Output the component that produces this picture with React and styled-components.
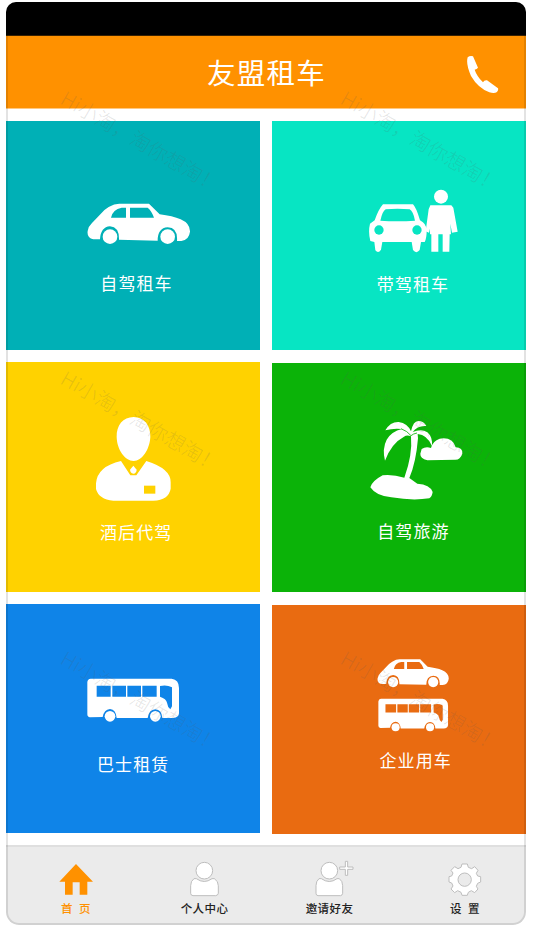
import React from "react";
import styled, { createGlobalStyle } from "styled-components";

const GlobalStyle = createGlobalStyle`
  *, *::before, *::after { box-sizing: border-box; }
  body {
    margin: 0;
    background: #fff;
    font-family: "Noto Sans CJK SC", "Liberation Sans", sans-serif;
  }
`;

const Phone = styled.div`
  position: relative;
  width: 520px;
  height: 923px;
  margin: 2px 0 0 6px;
  border-radius: 10px 10px 13px 13px;
  overflow: hidden;
  background: #fff;
  display: flex;
  flex-direction: column;

  &::after {
    content: "";
    position: absolute;
    inset: 0;
    border: 2px solid rgba(0, 0, 0, 0.11);
    border-top: 0;
    border-radius: inherit;
    pointer-events: none;
  }
`;

const StatusBar = styled.div`
  flex: none;
  height: 34px;
  background: #000;
  border-bottom: 1px solid #3a2100;
`;

const Header = styled.header`
  flex: none;
  height: 72px;
  background: #ff9100;
  display: grid;
  grid-template-columns: 1fr auto 1fr;
  align-items: center;
  box-shadow: 0 1px 0 #ffc880;
`;

const Title = styled.h1`
  grid-column: 2;
  margin: 0 0 1px;
  color: #fff;
  font-size: 28.5px;
  font-weight: 400;
  line-height: 40px;
  letter-spacing: 1.3px;
  padding-left: 1px;
`;

const CallButton = styled.button`
  justify-self: end;
  border: 0;
  padding: 0;
  margin: 5px 27px 0 0;
  background: none;
  line-height: 0;
`;

const Columns = styled.main`
  flex: 1;
  display: flex;
  justify-content: space-between;
  padding-top: 13px;
`;

const Column = styled.div`
  width: 254px;
  display: flex;
  flex-direction: column;
  gap: ${(p) => p.$gap}px;
`;

const Tile = styled.section`
  flex: none;
  height: 229.3px;
  background: ${(p) => p.$color};
  color: #fff;
  padding-top: ${(p) => p.$top}px;
`;

const TileIcon = styled.div`
  height: ${(p) => p.$height}px;
  margin-left: ${(p) => p.$left}px;
  line-height: 0;
`;

const TileLabel = styled.div`
  margin: ${(p) => p.$gap}px 0 0 ${(p) => p.$left}px;
  font-size: 17px;
  font-weight: 400;
  line-height: 24px;
  letter-spacing: 1.1px;
`;

const TabBar = styled.nav`
  flex: none;
  height: 80px;
  padding: 13px 0 0 40px;
  background: #ebebeb;
  border-top: 2px solid #dfdfdf;
  display: grid;
  grid-template-columns: 128.5px 125px 135.5px 1fr;
`;

const Tab = styled.a`
  width: 60px;
  display: flex;
  flex-direction: column;
  align-items: center;
  color: ${(p) => (p.$active ? "#ff9100" : "#222")};
`;

const TabIcon = styled.div`
  height: 40px;
  padding-top: ${(p) => p.$top || 0}px;
  margin-left: ${(p) => p.$shift || 0}px;
  line-height: 0;
`;

const TabLabel = styled.span`
  font-size: 11.5px;
  font-weight: 500;
  line-height: 16px;
  letter-spacing: 0.4px;
  white-space: pre;
`;

const Watermark = styled.div`
  position: absolute;
  left: ${(p) => p.$x}px;
  top: ${(p) => p.$y}px;
  transform: rotate(30deg);
  transform-origin: 0 50%;
  color: rgba(90, 90, 90, 0.17);
  font-size: 20px;
  font-weight: 300;
  line-height: 20px;
  letter-spacing: 0.1px;
  white-space: nowrap;
  pointer-events: none;
`;

const Svg = ({ box, scale = 3, children }) => {
  const [, , w, h] = box.split(" ").map(Number);
  return (
    <svg viewBox={box} width={w / scale} height={h / scale} fill="#fff">
      {children}
    </svg>
  );
};

const PhoneIcon = () => (
  <Svg box="604 165 99 117">
    <path d="M609 172Q616 166 625 169L640 203Q637 208 630 209Q636 228 655 247Q658 240 667 241L700 265Q702 270 697 276Q689 282 674 277Q640 264 619 228Q603 192 609 172Z" />
  </Svg>
);

const CarShape = ({ hole }) => (
  <g>
    <path d="M53 124Q55 110 66 100L89 76Q103 59 116 52Q133 42 148 42H237L269 74Q308 79 332 89Q361 102 360 126Q357 151 334 154H321Q324 114 293 113Q263 115 263 153L147 150Q148 112 120 110Q92 112 90 149H70Q50 145 53 124Z" />
    <path fill={hole} d="M123 84Q128 59 155 54H168V84ZM180 54H233Q245 64 252 84H180Z" />
    <circle cx="120" cy="141" r="22" />
    <circle cx="293" cy="141" r="22" />
  </g>
);

const CarIcon = () => (
  <Svg box="51 40 311 126">
    <CarShape hole="#00b0b6" />
  </Svg>
);

const DriverIcon = () => (
  <Svg box="54 26 270 192">
    <path d="M99 72H189Q199 82 210 120Q230 130 230 151Q230 174 224 185H213L209 209Q199 222 189 209L185 185H97L93 208Q85 221 76 210L73 185L61 182Q54 155 60 130L74 120Q86 86 99 72Z" />
    <path fill="#07e5c3" d="M107 87Q142 84 179 87Q190 93 195 121Q142 125 91 121Q97 93 107 87Z" />
    <circle cx="87" cy="149" r="14" fill="#07e5c3" />
    <circle cx="201" cy="149" r="14" fill="#07e5c3" />
    <circle cx="273" cy="49" r="21" />
    <path d="M241 75H304L310 82L323 154L306 157L301 130L303 162H299L298 214H278V162H265V214H244V162H240V145L237 157L227 153L236 87Z" />
  </Svg>
);

const ChauffeurIcon = () => (
  <Svg box="135 168 231 258">
    <path d="M251 171C282 171 302 196 301 231C299 269 276 303 251 303C225 303 201 269 200 231C199 196 219 171 251 171Z" />
    <path d="M213 303L241 346H259L289 303Q363 326 362 367V386Q356 420 310 422H190Q146 418 138 387V370Q142 319 213 303Z" />
    <path d="M250 317L260 329Q259 340 250 341Q241 339 240 329Z" />
    <path fill="#ffd200" d="M282 377H316V401H282Z" />
  </Svg>
);

const IslandIcon = () => (
  <Svg box="120 180 282 243">
    <path d="M166 211Q181 185 206 186Q233 190 243 214Q250 180 268 183Q282 185 289 198Q262 196 248 216Q274 205 292 217Q308 230 306 258Q291 224 263 222L264 235Q258 308 238 354L262 371Q300 373 308 396Q306 410 298 415Q248 423 184 412Q138 408 121 382Q126 363 158 346Q190 343 223 353Q248 285 243 229Q231 224 222 230Q184 250 165 302Q156 266 170 239Q185 214 216 207Q190 204 166 211Z" />
    <path d="M213 206Q232 213 243 227Q250 221 261 219" fill="none" stroke="#0bb308" strokeWidth="2.5" />
    <path d="M275 267Q287 259 303 264Q308 243 329 236Q368 230 377 262Q399 263 397 281Q391 299 376 299L292 301Q270 295 271 281Z" />
  </Svg>
);

const BusShape = ({ hole }) => (
  <g>
    <path d="M122 116H365Q387 119 387 144V220Q386 233 370 234H337Q335 209 316 208Q297 209 293 234H200Q198 209 180 207Q162 209 158 231L120 232Q112 231 112 223V126Q113 117 122 116Z" />
    <path fill={hole} d="M140 137H182V170H140ZM187 137H228V170H187ZM232 137H273V170H232ZM277 137H320V170H277ZM330 138Q350 133 366 142V199L361 208Q353 202 351 188Q349 176 330 170Z" />
    <circle cx="180" cy="229" r="16" />
    <circle cx="316" cy="229" r="16" />
  </g>
);

const BusIcon = () => (
  <Svg box="108 111 282 135">
    <BusShape hole="#0f84e8" />
  </Svg>
);

const FleetIcon = () => (
  <Svg box="141 54 219 222">
    <g transform="translate(106 29) scale(.695 .69)">
      <CarShape hole="#e96b11" />
    </g>
    <g transform="translate(60 89) scale(.76 .755)">
      <BusShape hole="#e96b11" />
    </g>
  </Svg>
);

const HomeIcon = () => (
  <Svg box="178 114 104 96">
    <path fill="#ff9100" d="M229 117L280 170H263V209H240V172H219V209H196V170H179Z" />
  </Svg>
);

const OUTLINE = { stroke: "#bdbdbd", strokeWidth: 3, strokeLinejoin: "round" };

const PersonIcon = () => (
  <Svg box="565 108 92 108">
    <path {...OUTLINE} d="M580 161H587Q611 178 634 161H641Q653 168 653 182V205Q652 211 645 212H577Q570 211 570 205V182Q570 168 580 161Z" />
    <circle {...OUTLINE} cx="611" cy="137" r="25" />
  </Svg>
);

const InviteIcon = () => (
  <Svg box="150 105 120 111">
    <path {...OUTLINE} d="M165 161H172Q196 178 219 161H226Q236 168 236 182V205Q235 211 230 212H162Q156 211 156 205V182Q156 168 165 161Z" />
    <circle {...OUTLINE} cx="196" cy="137" r="25" />
    <path {...OUTLINE} d="M244 109H251V126H267V133H251V151H244V133H227V126H244Z" />
  </Svg>
);

const GearIcon = () => (
  <Svg box="551 112 102 104">
    <path {...OUTLINE} d="M593 118H609L612 128L622 132L631 126L641 137L636 146L640 154L649 156V172L640 176L636 185L641 193L631 204L621 198L612 203L609 212H593L590 203L580 198L571 204L560 193L566 184L562 175L554 172V156L562 154L566 145L560 137L571 126L581 132L590 128Z" />
    <circle {...OUTLINE} cx="601" cy="165" r="20" fill="#ebebeb" />
  </Svg>
);

const LEFT = [
  { label: "自驾租车", color: "#00b0b6", icon: CarIcon, top: 82.3, left: 81, height: 42, gap: 26, textLeft: 94.3 },
  { label: "酒后代驾", color: "#ffd200", icon: ChauffeurIcon, top: 54, left: 89, height: 86, gap: 17.5, textLeft: 94 },
  { label: "巴士租赁", color: "#0f84e8", icon: BusIcon, top: 73, left: 80, height: 45, gap: 30, textLeft: 91 },
];

const RIGHT = [
  { label: "带驾租车", color: "#07e5c3", icon: DriverIcon, top: 67.7, left: 96, height: 64, gap: 19, textLeft: 104.8 },
  { label: "自驾旅游", color: "#0bb308", icon: IslandIcon, top: 57, left: 98, height: 81, gap: 18, textLeft: 105.2 },
  { label: "企业用车", color: "#e96b11", icon: FleetIcon, top: 53.5, left: 105, height: 74, gap: 16, textLeft: 107.5 },
];

const TABS = [
  { label: "首  页", icon: HomeIcon, active: true, top: 3 },
  { label: "个人中心", icon: PersonIcon, top: 1 },
  { label: "邀请好友", icon: InviteIcon, shift: 8, top: 0 },
  { label: "设  置", icon: GearIcon, top: 2 },
];

const MARKS = [92, 372, 652].flatMap((y) => [57, 337].map((x) => ({ x, y: y - 8 })));

const ServiceTile = ({ item }) => {
  const Icon = item.icon;
  return (
    <Tile $color={item.color} $top={item.top}>
      <TileIcon $left={item.left} $height={item.height}>
        <Icon />
      </TileIcon>
      <TileLabel $left={item.textLeft} $gap={item.gap}>
        {item.label}
      </TileLabel>
    </Tile>
  );
};

export default function App() {
  return (
    <>
      <GlobalStyle />
      <Phone>
        <StatusBar />
        <Header>
          <Title>友盟租车</Title>
          <CallButton aria-label="电话">
            <PhoneIcon />
          </CallButton>
        </Header>
        <Columns>
          <Column $gap={12}>
            {LEFT.map((item) => (
              <ServiceTile key={item.label} item={item} />
            ))}
          </Column>
          <Column $gap={12.6}>
            {RIGHT.map((item) => (
              <ServiceTile key={item.label} item={item} />
            ))}
          </Column>
        </Columns>
        <TabBar>
          {TABS.map(({ label, icon: Icon, active, shift, top }) => (
            <Tab key={label} $active={active}>
              <TabIcon $shift={shift} $top={top}>
                <Icon />
              </TabIcon>
              <TabLabel>{label}</TabLabel>
            </Tab>
          ))}
        </TabBar>
        {MARKS.map(({ x, y }) => (
          <Watermark key={`${x}-${y}`} $x={x} $y={y}>
            Hi小淘，淘你想淘！
          </Watermark>
        ))}
      </Phone>
    </>
  );
}
